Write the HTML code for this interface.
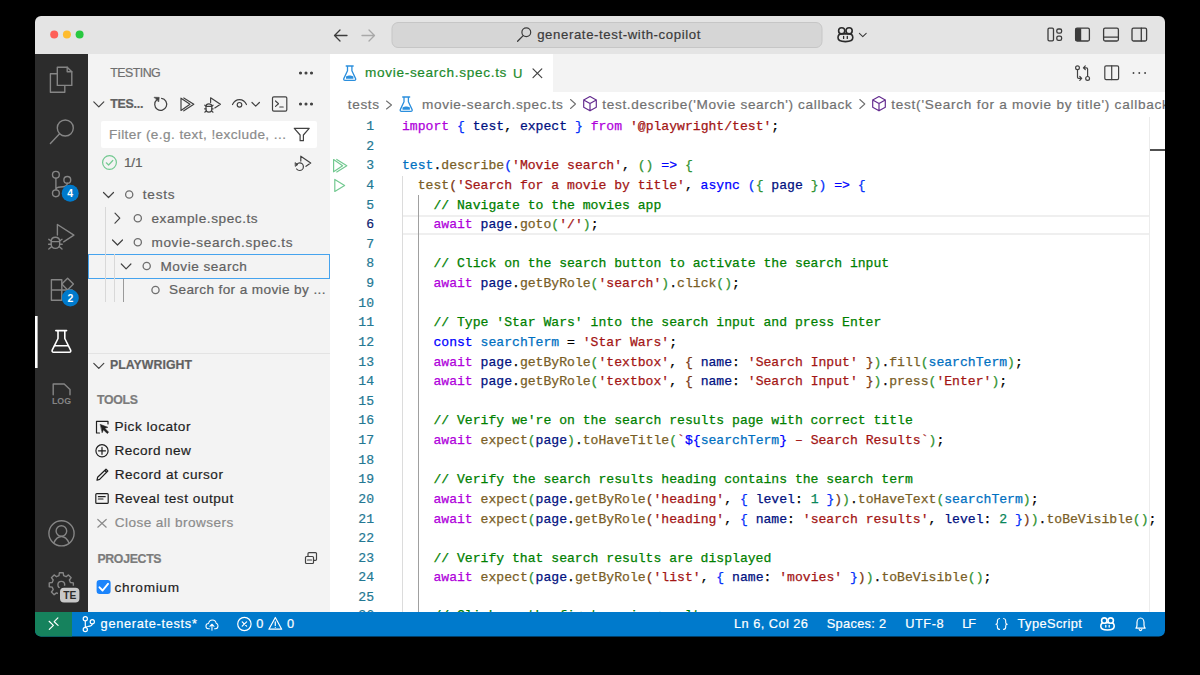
<!DOCTYPE html>
<html><head><meta charset="utf-8">
<style>
*{margin:0;padding:0;box-sizing:border-box}
html,body{width:1200px;height:675px;background:#000;overflow:hidden}
body{font-family:"Liberation Sans",sans-serif;position:relative}
#win{position:absolute;left:0;top:0;width:1200px;height:675px;clip-path:inset(16px 35px 38.5px 35px round 6px)}
.r{position:absolute}
.a{-webkit-text-stroke:0.2px currentColor;position:absolute;white-space:nowrap;line-height:1}
.code{-webkit-text-stroke:0.25px currentColor;position:absolute;left:402px;top:117.1px;font-family:"Liberation Mono",monospace;font-size:13.1px;line-height:19.625px;color:#000;white-space:pre}
.ln{-webkit-text-stroke:0.2px currentColor;position:absolute;left:300px;top:117.1px;width:74px;text-align:right;font-family:"Liberation Mono",monospace;font-size:13.1px;line-height:19.625px;color:#237893;white-space:pre}
.k{color:#af00db}.s{color:#0000ff}.v{color:#001080}.c{color:#0070c1}.f{color:#795e26}.t{color:#a31515}.m{color:#008000}.n{color:#098658}
.b1{color:#0431fa}.b2{color:#319331}.b3{color:#7b3814}
svg{position:absolute;left:0;top:0}
</style></head><body>
<div id="win">
<div class="r" style="left:35px;top:16px;width:1130px;height:38px;background:#e4e4e4"></div>
<div class="r" style="left:35px;top:54px;width:53px;height:558px;background:#2c2c2c"></div>
<div class="r" style="left:88px;top:54px;width:242px;height:558px;background:#f3f3f3"></div>
<div class="r" style="left:330px;top:54px;width:835px;height:558px;background:#ffffff"></div>
<div class="r" style="left:552.5px;top:54px;width:612.5px;height:37.5px;background:#f3f3f3"></div>
<div class="r" style="left:88px;top:353px;width:242px;height:1px;background:#e3e3e3"></div>
<div class="r" style="left:100.5px;top:121px;width:216.5px;height:27px;background:#ffffff;border-radius:2px"></div>
<div class="r" style="left:88px;top:254px;width:242px;height:24.5px;border:1px solid #45a3ee"></div>
<div class="r" style="left:105px;top:207px;width:1px;height:95px;background:#d8d8d8"></div>
<div class="r" style="left:114px;top:254px;width:1px;height:48px;background:#d8d8d8"></div>
<div class="r" style="left:123px;top:278.5px;width:1px;height:23.5px;background:#9a9a9a"></div>
<div class="r" style="left:402.5px;top:215px;width:747px;height:20px;border-top:2px solid #efefef;border-bottom:2px solid #efefef"></div>
<div class="r" style="left:402px;top:176px;width:1px;height:436px;background:#dcdcdc"></div>
<div class="r" style="left:417.8px;top:194.5px;width:1px;height:418px;background:#a0a0a0"></div>
<div class="r" style="left:1149px;top:117px;width:1px;height:495px;background:#ececec"></div>
<div class="r" style="left:1149.5px;top:148.8px;width:15.5px;height:2px;background:#505050"></div>
<div class="ln">1
2
3
4
5
<span style="color:#0b216f">6</span>
7
8
9
10
11
12
13
14
15
16
17
18
19
20
21
22
23
24
25
<span style="position:relative;top:-1.5px">26</span></div>
<div class="code"><span class="k">import</span> <span class="b1">{</span> <span class="v">test</span>, <span class="v">expect</span> <span class="b1">}</span> <span class="k">from</span> <span class="t">'@playwright/test'</span>;

<span class="c">test</span>.<span class="f">describe</span><span class="b1">(</span><span class="t">'Movie search'</span>, <span class="b2">()</span> <span class="s">=&gt;</span> <span class="b2">{</span>
  <span class="f">test</span><span class="b3">(</span><span class="t">'Search for a movie by title'</span>, <span class="s">async</span> <span class="b1">(</span><span class="b2">{</span> <span class="v">page</span> <span class="b2">}</span><span class="b1">)</span> <span class="s">=&gt;</span> <span class="b1">{</span>
    <span class="m">// Navigate to the movies app</span>
    <span class="k">await</span> <span class="v">page</span>.<span class="f">goto</span><span class="b2">(</span><span class="t">'/'</span><span class="b2">)</span>;

    <span class="m">// Click on the search button to activate the search input</span>
    <span class="k">await</span> <span class="v">page</span>.<span class="f">getByRole</span><span class="b2">(</span><span class="t">'search'</span><span class="b2">)</span>.<span class="f">click</span><span class="b2">()</span>;

    <span class="m">// Type 'Star Wars' into the search input and press Enter</span>
    <span class="s">const</span> <span class="c">searchTerm</span> = <span class="t">'Star Wars'</span>;
    <span class="k">await</span> <span class="v">page</span>.<span class="f">getByRole</span><span class="b2">(</span><span class="t">'textbox'</span>, <span class="b3">{</span> <span class="v">name</span>: <span class="t">'Search Input'</span> <span class="b3">}</span><span class="b2">)</span>.<span class="f">fill</span><span class="b2">(</span><span class="c">searchTerm</span><span class="b2">)</span>;
    <span class="k">await</span> <span class="v">page</span>.<span class="f">getByRole</span><span class="b2">(</span><span class="t">'textbox'</span>, <span class="b3">{</span> <span class="v">name</span>: <span class="t">'Search Input'</span> <span class="b3">}</span><span class="b2">)</span>.<span class="f">press</span><span class="b2">(</span><span class="t">'Enter'</span><span class="b2">)</span>;

    <span class="m">// Verify we're on the search results page with correct title</span>
    <span class="k">await</span> <span class="f">expect</span><span class="b2">(</span><span class="v">page</span><span class="b2">)</span>.<span class="f">toHaveTitle</span><span class="b2">(</span><span class="t">`</span><span class="s">${</span><span class="c">searchTerm</span><span class="s">}</span><span class="t"> – Search Results`</span><span class="b2">)</span>;

    <span class="m">// Verify the search results heading contains the search term</span>
    <span class="k">await</span> <span class="f">expect</span><span class="b2">(</span><span class="v">page</span>.<span class="f">getByRole</span><span class="b3">(</span><span class="t">'heading'</span>, <span class="b1">{</span> <span class="v">level</span>: <span class="n">1</span> <span class="b1">}</span><span class="b3">)</span><span class="b2">)</span>.<span class="f">toHaveText</span><span class="b2">(</span><span class="c">searchTerm</span><span class="b2">)</span>;
    <span class="k">await</span> <span class="f">expect</span><span class="b2">(</span><span class="v">page</span>.<span class="f">getByRole</span><span class="b3">(</span><span class="t">'heading'</span>, <span class="b1">{</span> <span class="v">name</span>: <span class="t">'search results'</span>, <span class="v">level</span>: <span class="n">2</span> <span class="b1">}</span><span class="b3">)</span><span class="b2">)</span>.<span class="f">toBeVisible</span><span class="b2">()</span>;

    <span class="m">// Verify that search results are displayed</span>
    <span class="k">await</span> <span class="f">expect</span><span class="b2">(</span><span class="v">page</span>.<span class="f">getByRole</span><span class="b3">(</span><span class="t">'list'</span>, <span class="b1">{</span> <span class="v">name</span>: <span class="t">'movies'</span> <span class="b1">}</span><span class="b3">)</span><span class="b2">)</span>.<span class="f">toBeVisible</span><span class="b2">()</span>;

    <span class="m" style="position:relative;top:-1.5px">// Click on the first movie result</span></div>
<div class="r" style="left:35px;top:612px;width:1130px;height:25px;background:#007acc"></div>
<div class="r" style="left:35px;top:612px;width:37px;height:25px;background:#16825d"></div>
<svg width="1200" height="675" viewBox="0 0 1200 675" fill="none" stroke-linecap="round" stroke-linejoin="round">
<!-- traffic lights -->
<circle cx="54.2" cy="34.6" r="4" fill="#fe5f57"/>
<circle cx="66.9" cy="34.6" r="4" fill="#febc2e"/>
<circle cx="79.6" cy="34.6" r="4" fill="#28c840"/>
<!-- nav arrows -->
<path d="M334.5 35.5H347M340 30L334.5 35.5L340 41" stroke="#3c3c3c" stroke-width="1.3"/>
<path d="M362 35.5H374.5M369 30L374.5 35.5L369 41" stroke="#a8a8a8" stroke-width="1.3"/>
<!-- command center -->
<rect x="392" y="22.5" width="430" height="25" rx="6" fill="#d6d6d6" stroke="#c6c6c6" stroke-width="1"/>
<circle cx="526.3" cy="32.3" r="4.4" stroke="#3b3b3b" stroke-width="1.2"/>
<path d="M523.2 35.6L517.6 41.3" stroke="#3b3b3b" stroke-width="1.3"/>
<!-- copilot title icon -->
<g stroke="#2b2b2b" stroke-width="1.6">
<path d="M838 37.8C838 35.2 839.6 33.9 841.5 33.9H849.3C851.2 33.9 852.8 35.2 852.8 37.8C852.8 40.2 849.6 41.6 845.4 41.6C841.2 41.6 838 40.2 838 37.8Z"/>
<circle cx="841.7" cy="30.8" r="3.1" fill="#e4e4e4"/>
<circle cx="849.1" cy="30.8" r="3.1" fill="#e4e4e4"/>
</g>
<path d="M843.6 36.4V38.4M847.3 36.4V38.4" stroke="#2b2b2b" stroke-width="1.3"/>
<path d="M859.4 33.4L862.8 36.6L866.2 33.4" stroke="#3b3b3b" stroke-width="1.1"/>
<!-- layout icons -->
<g stroke="#3b3b3b" stroke-width="1.3">
<rect x="1048" y="28.2" width="5.5" height="12.6" rx="1.2"/>
<rect x="1056.8" y="29" width="4.8" height="4.2" rx="1.6"/>
<rect x="1056.8" y="36.2" width="4.8" height="4.2" rx="1.6"/>
<rect x="1075.6" y="28.2" width="13.8" height="12.8" rx="1.5"/>
<rect x="1103.6" y="28.2" width="14.8" height="12.8" rx="1.5"/>
<path d="M1103.6 37.2H1118.4"/>
<rect x="1132" y="28.2" width="14.6" height="12.8" rx="1.5"/>
<path d="M1141.3 28.2V41"/>
</g>
<rect x="1075.6" y="28.2" width="5.6" height="12.8" fill="#3b3b3b"/>

<!-- ===== activity bar ===== -->
<g stroke="#858585" stroke-width="1.4">
<!-- explorer -->
<path d="M57.3 67.2H67.2L71.8 71.8V85.4H57.3Z"/>
<path d="M67.2 67.2V71.8H71.8"/>
<path d="M56.8 73.8H50.4V92.3H64.8V85.8"/>
<!-- search -->
<circle cx="65.3" cy="128" r="8"/>
<path d="M59.6 133.7L50.4 143.4"/>
<!-- scm -->
<circle cx="55.9" cy="174.8" r="3.4"/>
<circle cx="67.3" cy="179.9" r="3.4"/>
<circle cx="55.9" cy="193.3" r="3.4"/>
<path d="M55.9 178.2V189.9M67.3 183.3C67.3 186.5 64 187 60.5 187C58 187 55.9 188 55.9 189.9"/>
<!-- debug -->
<path d="M57.4 235V224.5L73.9 235.2L63.6 241.8"/>
<path d="M51.2 241.6C51.2 239 53 237.3 55.4 237.3C57.9 237.3 59.7 239 59.7 241.6V244.3C59.7 246.7 57.8 248.4 55.4 248.4C53 248.4 51.2 246.7 51.2 244.3ZM51.2 241.6H59.7"/>
<path d="M48.8 239.3L51.3 241M62 239.3L59.6 241M48.6 244.3H51.2M59.7 244.3H62.2M48.8 249L51.5 246.8M62 249L59.4 246.8"/>
<!-- extensions -->
<path d="M51.4 279.8H61.8V300.2H51.4ZM51.4 290H72.2V300.2"/>
<path d="M67.6 278.3L73.4 284.1L67.6 289.9L61.8 284.1Z"/>
<!-- log -->
<path d="M53.2 394.7V384H64.2L70 389.6V394.7"/>
<!-- accounts -->
<circle cx="61.5" cy="533.3" r="12.6"/>
<circle cx="61.4" cy="531" r="5.3"/>
<path d="M53.8 543C55.5 539 58 536.5 61.4 536.5C64.8 536.5 67.3 539 69 543"/>
<!-- gear -->
<path d="M58.96 575.70 L59.39 572.75 L63.21 572.75 L63.64 575.70 L66.08 576.71 L68.47 574.93 L71.17 577.63 L69.39 580.02 L70.40 582.46 L73.35 582.89 L73.35 586.71 L70.40 587.14 L69.39 589.58 L71.17 591.97 L68.47 594.67 L66.08 592.89 L63.64 593.90 L63.21 596.85 L59.39 596.85 L58.96 593.90 L56.52 592.89 L54.13 594.67 L51.43 591.97 L53.21 589.58 L52.20 587.14 L49.25 586.71 L49.25 582.89 L52.20 582.46 L53.21 580.02 L51.43 577.63 L54.13 574.93 L56.52 576.71Z"/>
<circle cx="61.3" cy="584.8" r="3.4"/>
</g>
<!-- flask active -->
<g stroke="#ffffff" stroke-width="1.6">
<path d="M55.8 330.6H66.6M58 330.6V338.5L52.2 350.2C51.8 351.2 52.4 352.3 53.5 352.3H69.4C70.5 352.3 71.1 351.2 70.6 350.2L64.8 338.5V330.6"/>
<path d="M54.6 345.8H68.3"/>
</g>

<rect x="35" y="316" width="2.6" height="52" fill="#ffffff" stroke="none"/>
<!-- badges -->
<circle cx="70.2" cy="193.3" r="8.5" fill="#007acc"/>
<circle cx="70.3" cy="298.1" r="8.5" fill="#007acc"/>
<text x="70.2" y="197.2" font-family="Liberation Sans" font-weight="bold" font-size="10.5" fill="#fff" text-anchor="middle">4</text>
<text x="70.3" y="302" font-family="Liberation Sans" font-weight="bold" font-size="10.5" fill="#fff" text-anchor="middle">2</text>
<text x="61.5" y="404.4" font-family="Liberation Sans" font-weight="bold" font-size="8.8" fill="#858585" text-anchor="middle">LOG</text>
<rect x="59" y="586.8" width="21.4" height="16.6" rx="5" fill="#c8c8c8" stroke="#2c2c2c" stroke-width="2"/>
<text x="69.8" y="599" font-family="Liberation Sans" font-weight="bold" font-size="10.2" fill="#2c2c2c" text-anchor="middle">TE</text>

<!-- ===== sidebar icons ===== -->
<g stroke="#424242" stroke-width="1.2">
<!-- ellipsis top -->
<circle cx="300.5" cy="73" r="0.95" fill="#424242"/><circle cx="306" cy="73" r="0.95" fill="#424242"/><circle cx="311.5" cy="73" r="0.95" fill="#424242"/>
<circle cx="300.5" cy="104" r="0.95" fill="#424242"/><circle cx="306" cy="104" r="0.95" fill="#424242"/><circle cx="311.5" cy="104" r="0.95" fill="#424242"/>
<!-- chevrons -->
<path d="M93.8 101.8L98.8 106.8L103.8 101.8"/>
<path d="M93.8 363.3L98.8 368.3L103.8 363.3"/>
<path d="M252 102.5L255.7 106.2L259.4 102.5"/>
<!-- refresh -->
<path d="M161.6 98.4A6 6 0 1 1 156.8 99.8"/>
<path d="M154.4 97.3L159.2 97.4L158.7 101.6Z" fill="#424242" stroke-width="0.7"/>
<!-- run all -->
<path d="M181 98.2V110.5L190 104.3Z"/>
<path d="M183.8 98L193.8 104.3L183.8 110.8"/>
<!-- debug small -->
<path d="M210.6 102.4V97.8L220.4 104.3L214.8 107.9"/>
<path d="M206 106.3C206 104.8 207.3 103.9 208.9 103.9C210.5 103.9 211.8 104.8 211.8 106.3V109.2C211.8 111 210.5 112.2 208.9 112.2C207.3 112.2 206 111 206 109.2ZM206 106.3H211.8"/>
<path d="M204.8 105.2L206 106.2M213 105.2L211.8 106.2M204.6 108.8H206M211.8 108.8H213.2M204.8 112.2L206.2 110.9M213 112.2L211.6 110.9"/>
<!-- eye -->
<path d="M232.5 104.5C234 101.4 236.6 99.6 239.5 99.6C242.4 99.6 245 101.4 246.5 104.5"/>
<circle cx="239.5" cy="104.8" r="2.3"/>
<!-- terminal -->
<rect x="272.5" y="96.8" width="14.3" height="14.3" rx="1.3"/>
<path d="M275.5 101L278.5 103.7L275.5 106.4M279.8 107H283.2"/>
<!-- filter -->
<path d="M294.3 128.3H309.2L303.4 135V140.7H300.1V135Z"/>
<!-- rerun -->
<path d="M300.8 161.1V156.2L310.7 163.1L306 166.3"/>
<path d="M297 164.2C297.7 163.4 298.6 162.9 299.6 162.9C301.7 162.9 303.4 164.6 303.4 166.7C303.4 168.8 301.7 170.5 299.6 170.5C298.4 170.5 297.3 169.9 296.6 169"/>
<path d="M295.4 162.8L297.9 164.6L295.6 166.2Z" fill="#424242" stroke-width="0.8"/>
<!-- tree -->
<path d="M103.5 192.5L108.5 197.5L113.5 192.5"/>
<path d="M115 213.2L119.8 218.2L115 223.2"/>
<path d="M112.5 240L117.5 245L122.5 240"/>
<path d="M121.3 264L126.1 268.8L130.9 264"/>
<circle cx="129.2" cy="194.5" r="3.6" stroke="#6f6f6f" stroke-width="1.3"/>
<circle cx="137.8" cy="218.3" r="3.6" stroke="#6f6f6f" stroke-width="1.3"/>
<circle cx="137.8" cy="242.3" r="3.6" stroke="#6f6f6f" stroke-width="1.3"/>
<circle cx="146.7" cy="266" r="3.6" stroke="#6f6f6f" stroke-width="1.3"/>
<circle cx="155.5" cy="290" r="3.6" stroke="#6f6f6f" stroke-width="1.3"/>
<!-- tools -->
<path d="M99.5 433H96.5V421.3H108V424" stroke="#1f1f1f"/>
<path d="M100.5 424.5L107.8 427.3L104.8 428.3L108.6 432.2L107.2 433.5L103.4 429.7L102.3 432.4Z" fill="#1f1f1f" stroke="#1f1f1f" stroke-width="0.6"/>
<circle cx="102" cy="450.8" r="6.1" stroke="#1f1f1f"/>
<path d="M102 447.3V454.3M98.5 450.8H105.5" stroke="#1f1f1f"/>
<path d="M97 480.2L97.6 477.3L106 469.2L107.8 471L99.6 479.4Z M104.8 470.5L106.6 472.3" stroke="#1f1f1f"/>
<rect x="95.8" y="493.6" width="12.4" height="9.8" rx="1" stroke="#1f1f1f"/>
<path d="M98.4 496.7H105.2M98.4 499H103" stroke="#1f1f1f"/>
<path d="M97.8 519.5L106.2 527.2M106.2 519.5L97.8 527.2" stroke="#8b8b8b"/>
<!-- collapse -->
<rect x="305.5" y="556.5" width="8" height="7" rx="1" stroke="#424242"/>
<path d="M308 556.5V553.6C308 553 308.4 552.6 309 552.6H315.5C316.1 552.6 316.5 553 316.5 553.6V559.2C316.5 559.8 316.1 560.3 315.5 560.3H313.5M307.5 560H311.5" stroke="#424242"/>
</g>
<!-- check circle -->
<circle cx="109.5" cy="162.5" r="6.9" stroke="#73c991" stroke-width="1.2"/>
<path d="M106.3 162.8L108.6 165L112.8 160.5" stroke="#73c991" stroke-width="1.2"/>
<!-- checkbox -->
<rect x="96.6" y="580" width="14" height="14" rx="3" fill="#1c84fb"/>
<path d="M99.5 587.3L102.6 590.5L108 583.8" stroke="#fff" stroke-width="1.9"/>

<!-- ===== editor ===== -->
<g stroke="#2b8fdd" stroke-width="1.3">
<path d="M346.2 66H353.2M347.5 66V70.8L343.8 78.6C343.4 79.6 344 80.4 345 80.4H354.4C355.4 80.4 356 79.6 355.6 78.6L351.9 70.8V66"/>
<path d="M402.7 97H409.7M404 97V101.8L400.3 109.6C399.9 110.6 400.5 111.4 401.5 111.4H410.9C411.9 111.4 412.5 110.6 412.1 109.6L408.4 101.8V97"/>
</g>
<path d="M346 76.5C347.5 75.7 348.5 75.5 349.7 75.5C350.9 75.5 352 75.7 353.4 76.5V78.8H346Z" fill="#2b8fdd"/>
<path d="M402.5 107.5C404 106.7 405 106.5 406.2 106.5C407.4 106.5 408.5 106.7 409.9 107.5V109.8H402.5Z" fill="#2b8fdd"/>
<path d="M533 68.8L541.8 77.6M541.8 68.8L533 77.6" stroke="#424242" stroke-width="1.2"/>
<g stroke="#717171" stroke-width="1.1">
<path d="M386.5 101L391.5 105L386.5 109"/>
<path d="M570.5 99.5L575.5 104L570.5 108.5"/>
<path d="M859.8 99.5L864.8 104L859.8 108.5"/>
</g>
<g stroke="#652d90" stroke-width="1.2">
<path d="M590 96.5L596.3 100V107.2L590 110.8L583.7 107.2V100Z M583.7 100L590 103.6L596.3 100M590 103.6V110.8"/>
<path d="M879 96.5L885.3 100V107.2L879 110.8L872.7 107.2V100Z M872.7 100L879 103.6L885.3 100M879 103.6V110.8"/>
</g>
<!-- editor actions -->
<g stroke="#424242" stroke-width="1.2">
<circle cx="1077.5" cy="67.8" r="1.9"/>
<circle cx="1087.6" cy="78.4" r="1.9"/>
<path d="M1077.5 69.7V77.2C1077.5 78 1078 78.4 1078.8 78.4H1081.5M1079.8 76.5L1081.7 78.4L1079.8 80.3"/>
<path d="M1087.6 76.5V69C1087.6 68.2 1087.1 67.8 1086.3 67.8H1083.6M1085.3 65.9L1083.4 67.8L1085.3 69.7"/>
<rect x="1104.8" y="65.8" width="13.8" height="13.8" rx="1.3"/>
<path d="M1111.7 65.8V79.6"/>
</g>
<circle cx="1133.5" cy="73" r="0.95" fill="#424242"/><circle cx="1139.3" cy="73" r="0.95" fill="#424242"/><circle cx="1145.1" cy="73" r="0.95" fill="#424242"/>
<!-- gutter run -->
<g stroke="#73c991" stroke-width="1.2">
<path d="M333.6 159.6V171.8L342.6 165.7Z"/>
<path d="M336.8 159.4L346.8 165.7L336.8 172"/>
<path d="M334.8 179.4V191.4L344.6 185.4Z"/>
</g>

<!-- ===== status bar ===== -->
<g stroke="#ffffff" stroke-width="1.2">
<path d="M49.1 621.3L53.4 625.4L49.3 629.4M57.9 617.9L54.2 621.7L58.1 625.4"/>
<circle cx="85.3" cy="618.7" r="2.1"/>
<circle cx="92.3" cy="621.7" r="2.1"/>
<circle cx="85.3" cy="629.5" r="2.1"/>
<path d="M85.3 620.8V627.4M92.3 623.8C92.3 626 90 626.3 87.8 626.5C86.3 626.6 85.3 627 85.3 627.6"/>
<g transform="translate(211.8 624.8) scale(0.86) translate(-211.8 -624.8)"><path d="M209 629.5H207.8C206 629.5 205 628 205 626.3C205 624.5 206.4 623.3 208 623.3C208.5 620.8 210.3 619.3 212.5 619.3C214.8 619.3 216.5 620.9 216.8 623C218.3 623.3 219 624.6 219 626C219 627.8 217.8 629.5 216 629.5H215"/>
<path d="M212 631V624.3M209.6 626.5L212 624.1L214.4 626.5"/></g>
<circle cx="244.4" cy="624" r="6.7"/>
<path d="M242.2 621.8L246.6 626.2M246.6 621.8L242.2 626.2"/>
<path d="M275.3 617.5L281.7 629.2H268.9Z"/>
<path d="M275.3 621.8V625.5"/>
<path d="M999.5 618.5C998 618.7 997.4 619.5 997.4 620.8V622.5C997.4 623.6 996.9 624.2 995.9 624.2C996.9 624.2 997.4 624.8 997.4 625.9V627.3C997.4 628.6 998 629.3 999.5 629.4M1003.6 618.5C1005.1 618.7 1005.7 619.5 1005.7 620.8V622.5C1005.7 623.6 1006.2 624.2 1007.3 624.2C1006.2 624.2 1005.7 624.8 1005.7 625.9V627.3C1005.7 628.6 1005.1 629.3 1003.6 629.4" stroke-width="1.1"/>
<path d="M1136 628.2C1136.5 627.5 1137 626.5 1137 625V622.5C1137 620 1138.6 618 1140.5 618C1142.4 618 1144 620 1144 622.5V625C1144 626.5 1144.5 627.5 1145.2 628.2Z"/>
<path d="M1139.2 629.5C1139.5 630.3 1140 630.6 1140.5 630.6C1141 630.6 1141.5 630.3 1141.8 629.5"/>
</g>
<circle cx="275.3" cy="627.3" r="0.6" fill="#fff"/>
<g stroke="#ffffff" stroke-width="1.6">
<path d="M1100.8 626.3C1100.8 624 1102.2 622.8 1104 622.8H1111C1112.8 622.8 1114.2 624 1114.2 626.3C1114.2 628.6 1111.3 630 1107.5 630C1103.7 630 1100.8 628.6 1100.8 626.3Z"/>
<circle cx="1104.3" cy="620.6" r="2.7" fill="#007acc"/>
<circle cx="1110.7" cy="620.6" r="2.7" fill="#007acc"/>
</g>
<path d="M1105.8 625.3V627.1M1109.2 625.3V627.1" stroke="#fff" stroke-width="1.3"/>
</svg>

<div class="a" style="left:537.20px;top:28.28px;font-size:13.2px;letter-spacing:0.603px;color:#3b3b3b;">generate-test-with-copilot</div>
<div class="a" style="left:110.20px;top:66.96px;font-size:12.4px;letter-spacing:-0.526px;color:#6f6f6f;">TESTING</div>
<div class="a" style="left:110.20px;top:98.26px;font-size:12.4px;letter-spacing:-0.234px;color:#616161;font-weight:bold;">TES...</div>
<div class="a" style="left:109.00px;top:127.94px;font-size:13.6px;letter-spacing:0.419px;color:#8b8b8b;">Filter (e.g. text, !exclude, ...</div>
<div class="a" style="left:124.00px;top:155.94px;font-size:13.6px;letter-spacing:-0.202px;color:#616161;">1/1</div>
<div class="a" style="left:142.80px;top:187.94px;font-size:13.6px;letter-spacing:0.751px;color:#616161;">tests</div>
<div class="a" style="left:151.40px;top:211.94px;font-size:13.6px;letter-spacing:0.574px;color:#616161;">example.spec.ts</div>
<div class="a" style="left:151.40px;top:235.94px;font-size:13.6px;letter-spacing:0.673px;color:#616161;">movie-search.spec.ts</div>
<div class="a" style="left:160.50px;top:259.94px;font-size:13.6px;letter-spacing:0.495px;color:#616161;">Movie search</div>
<div class="a" style="left:169.00px;top:283.44px;font-size:13.6px;letter-spacing:0.382px;color:#616161;">Search for a movie by ...</div>
<div class="a" style="left:110.00px;top:359.05px;font-size:12.3px;letter-spacing:0.050px;color:#616161;font-weight:bold;">PLAYWRIGHT</div>
<div class="a" style="left:97.00px;top:393.55px;font-size:12.3px;letter-spacing:-0.282px;color:#7b7b7b;font-weight:bold;">TOOLS</div>
<div class="a" style="left:114.50px;top:420.44px;font-size:13.6px;letter-spacing:0.517px;color:#1f1f1f;">Pick locator</div>
<div class="a" style="left:114.50px;top:444.44px;font-size:13.6px;letter-spacing:0.431px;color:#1f1f1f;">Record new</div>
<div class="a" style="left:114.70px;top:468.44px;font-size:13.6px;letter-spacing:0.520px;color:#1f1f1f;">Record at cursor</div>
<div class="a" style="left:114.70px;top:492.14px;font-size:13.6px;letter-spacing:0.528px;color:#1f1f1f;">Reveal test output</div>
<div class="a" style="left:114.70px;top:516.14px;font-size:13.6px;letter-spacing:0.440px;color:#8b8b8b;">Close all browsers</div>
<div class="a" style="left:97.40px;top:552.94px;font-size:12.3px;letter-spacing:-0.300px;color:#7b7b7b;font-weight:bold;">PROJECTS</div>
<div class="a" style="left:114.40px;top:580.84px;font-size:13.6px;letter-spacing:0.699px;color:#1f1f1f;">chromium</div>
<div class="a" style="left:365.00px;top:66.44px;font-size:13.6px;letter-spacing:0.683px;color:#1d8a2c;">movie-search.spec.ts</div>
<div class="a" style="left:513.00px;top:66.75px;font-size:13.0px;letter-spacing:0.000px;color:#1d8a2c;">U</div>
<div class="a" style="left:347.80px;top:98.44px;font-size:13.6px;letter-spacing:0.626px;color:#717171;">tests</div>
<div class="a" style="left:422.00px;top:98.44px;font-size:13.6px;letter-spacing:0.657px;color:#717171;">movie-search.spec.ts</div>
<div class="a" style="left:602.30px;top:98.44px;font-size:13.6px;letter-spacing:0.662px;color:#717171;">test.describe('Movie search') callback</div>
<div class="a" style="left:891.30px;top:98.44px;font-size:13.6px;letter-spacing:0.729px;color:#717171;">test('Search for a movie by title') callback</div>
<div class="a" style="left:100.60px;top:617.87px;font-size:12.8px;letter-spacing:0.680px;color:#ffffff;">generate-tests*</div>
<div class="a" style="left:256.25px;top:617.87px;font-size:12.8px;letter-spacing:0.000px;color:#ffffff;">0</div>
<div class="a" style="left:286.90px;top:617.87px;font-size:12.8px;letter-spacing:0.000px;color:#ffffff;">0</div>
<div class="a" style="left:734.00px;top:617.82px;font-size:12.8px;letter-spacing:0.449px;color:#ffffff;">Ln 6, Col 26</div>
<div class="a" style="left:826.70px;top:617.82px;font-size:12.8px;letter-spacing:0.325px;color:#ffffff;">Spaces: 2</div>
<div class="a" style="left:905.20px;top:617.82px;font-size:12.8px;letter-spacing:0.553px;color:#ffffff;">UTF-8</div>
<div class="a" style="left:962.20px;top:617.82px;font-size:12.8px;letter-spacing:-1.112px;color:#ffffff;">LF</div>
<div class="a" style="left:1017.60px;top:617.82px;font-size:12.8px;letter-spacing:0.413px;color:#ffffff;">TypeScript</div>
</div>
</body></html>
